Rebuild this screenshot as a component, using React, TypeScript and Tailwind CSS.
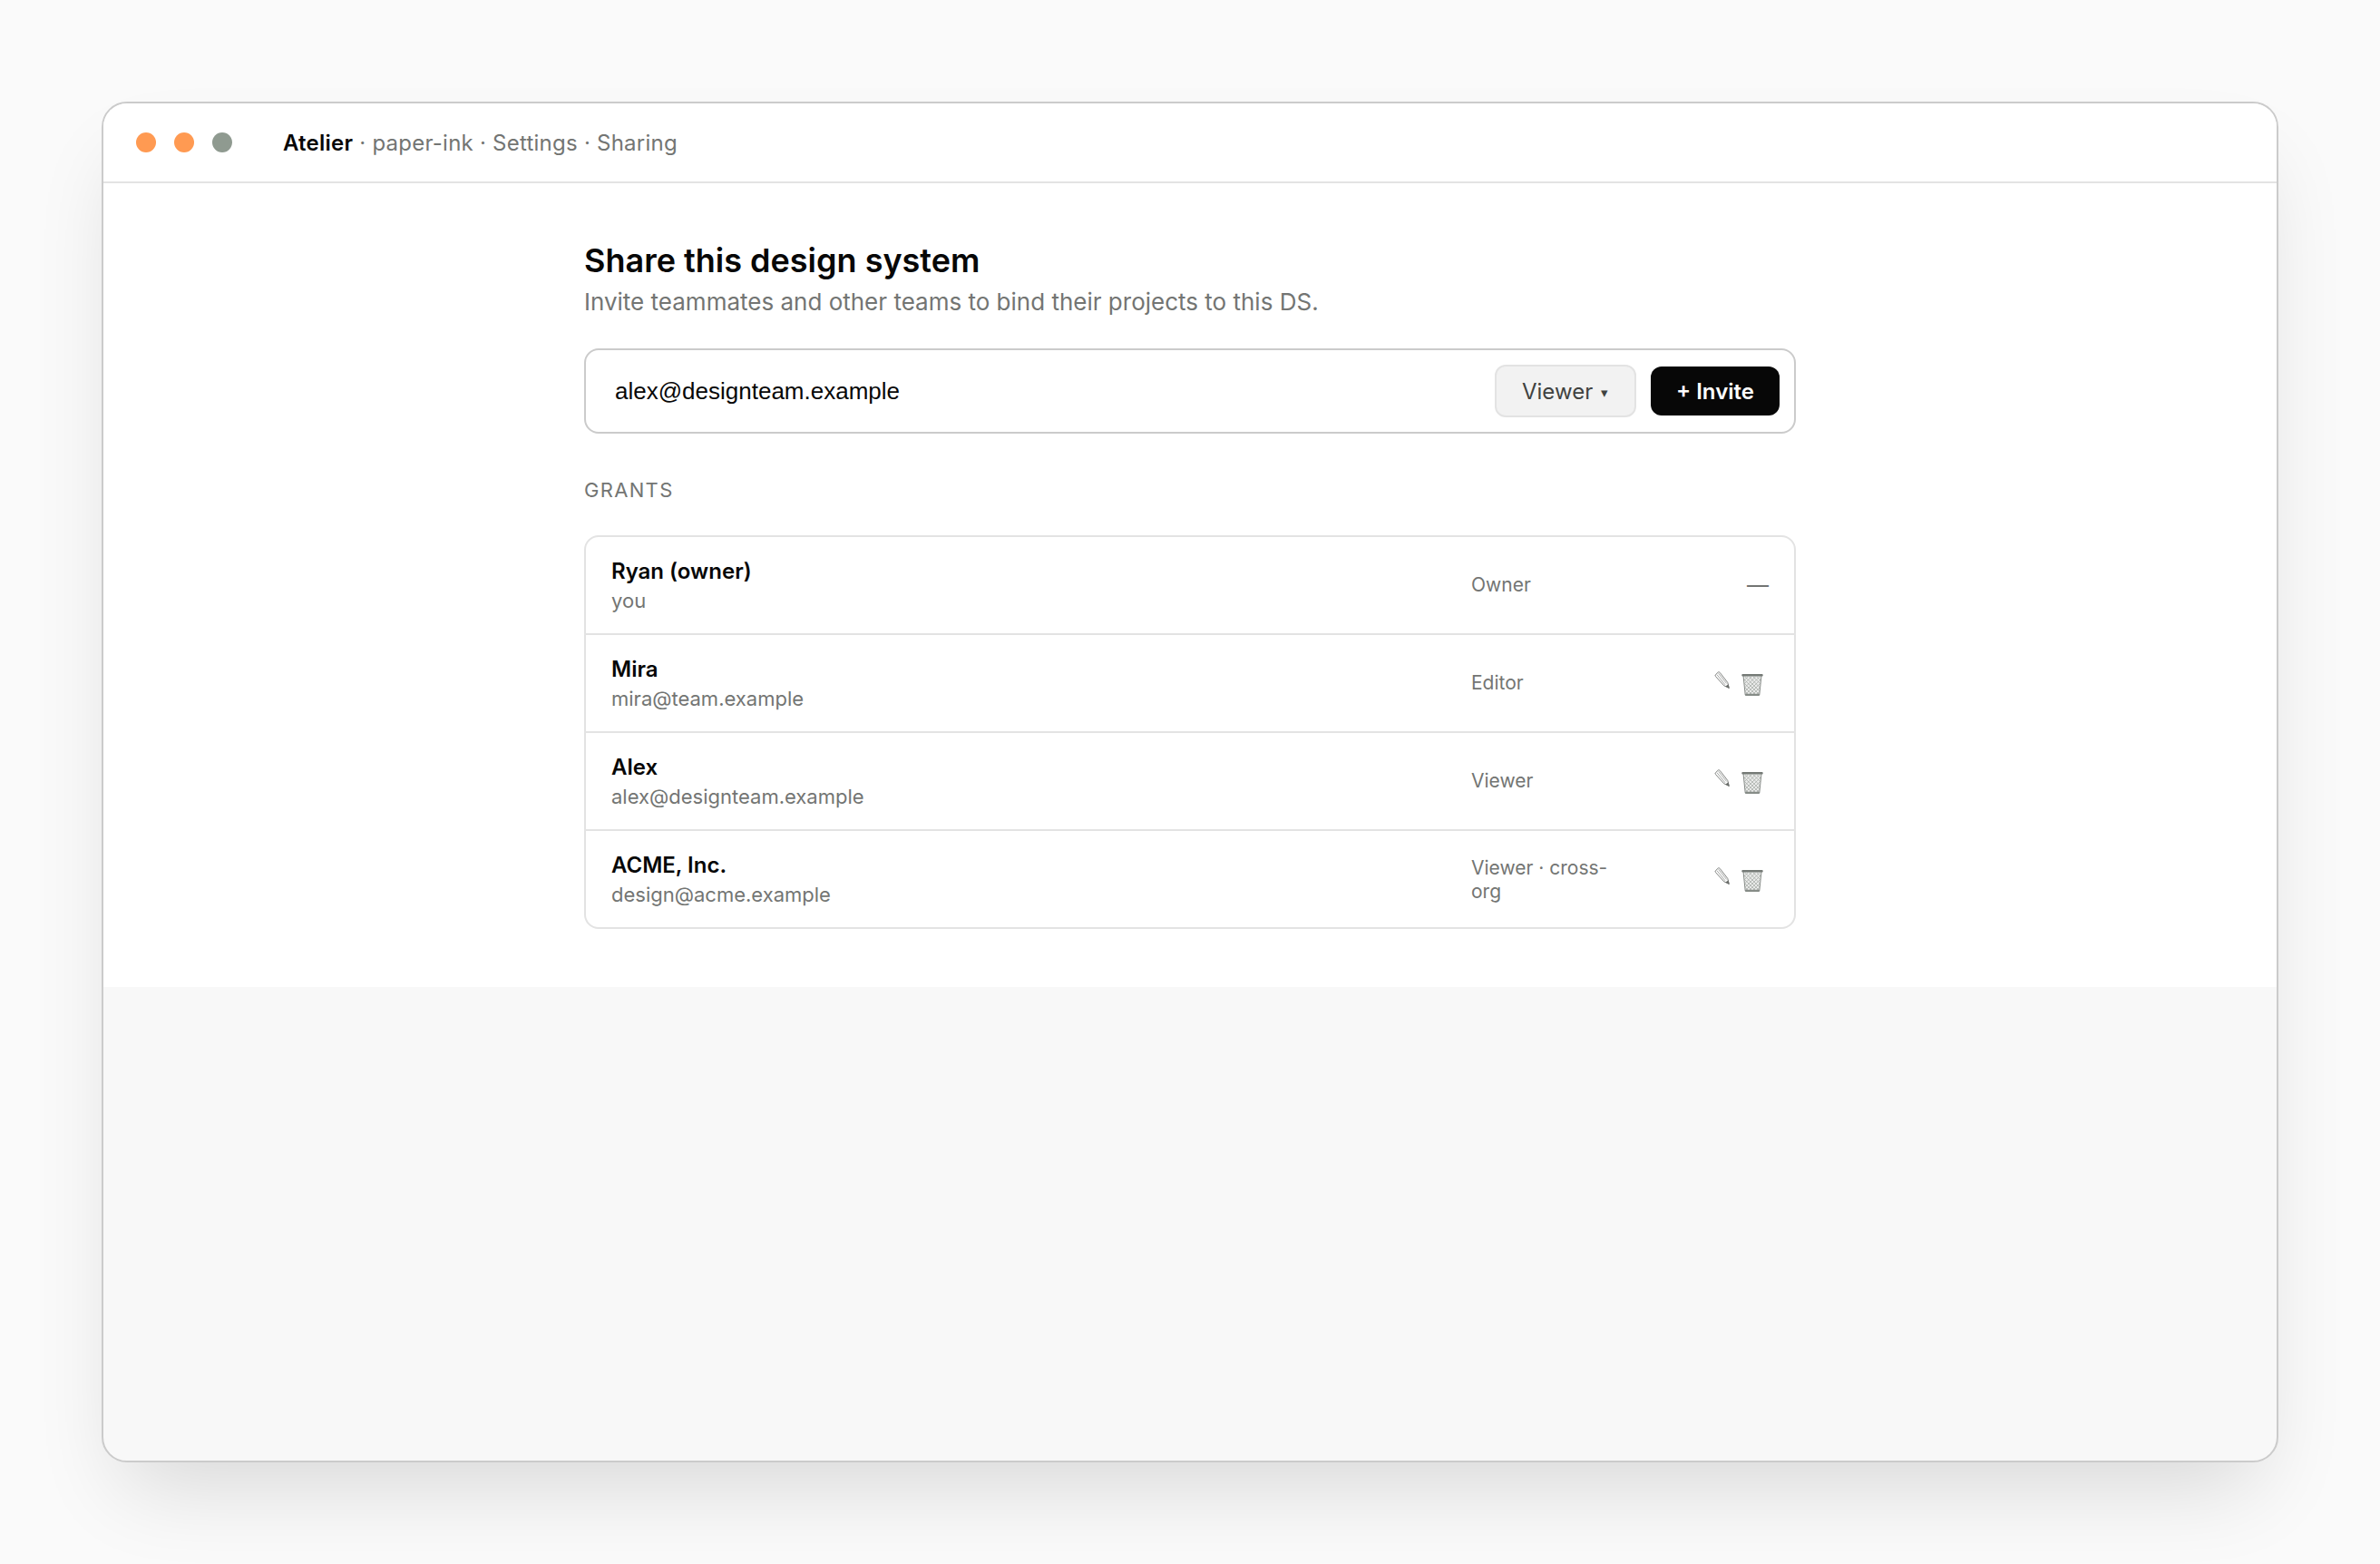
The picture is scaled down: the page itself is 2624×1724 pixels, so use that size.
interface Grant {
  name: string;
  email: string;
  role: string;
  locked?: boolean;
}

const grants: Grant[] = [
  { name: "Ryan (owner)", email: "you", role: "Owner", locked: true },
  { name: "Mira", email: "mira@team.example", role: "Editor" },
  { name: "Alex", email: "alex@designteam.example", role: "Viewer" },
  { name: "ACME, Inc.", email: "design@acme.example", role: "Viewer · cross-org" },
];

function PencilIcon() {
  return (
    <svg className="h-[20px] w-[18px]" viewBox="0 0 18 20" fill="none" stroke="#7f827f">
      <path d="M1.2 4 L4.4 0.9 Q5.4 0.5 6.2 1.4 L14.8 12.4 L16.2 18.4 L10.8 15.8 L1.5 5.6 Q0.8 4.8 1.2 4 Z" strokeWidth="1" />
      <path d="M2.9 3.6 L12 14.8 M4.6 2.2 L13.6 13.4" strokeWidth="0.7" />
      <path d="M16.7 18.9 L12.2 16.6 L15.7 14.2 Z" fill="#6a6d6a" stroke="none" />
    </svg>
  );
}

function TrashIcon() {
  return (
    <svg className="mt-[2px] h-[26px] w-[24px]" viewBox="0 0 24 26" fill="none">
      <path d="M2 2.5 L4.2 24 H19.8 L22 2.5 Z" fill="#e9eae9" stroke="#868b87" strokeWidth="1" />
      <path
        d="M3 8 L7 4 M3 12 L11 4 M3.5 16 L15.5 4 M4 20 L20 4 M5 23 L21 7 M9 23 L20.5 11.5 M13 23 L20 16 M17 23 L19.5 20.5 M21 8 L17 4 M21 12 L13 4 M20.5 16 L8.5 4 M20 20 L4 4 M19 23 L3 7 M15 23 L3.5 11.5 M11 23 L4 16 M7 23 L4.5 20.5"
        stroke="#a3a7a4"
        strokeWidth="0.7"
      />
      <rect x="0.3" y="1" width="23.4" height="2.6" rx="1" fill="#757a76" />
      <rect x="4" y="22.8" width="16" height="2.2" rx="1" fill="#868c87" />
    </svg>
  );
}

function GrantRow({ grant }: { grant: Grant }) {
  return (
    <div className="group grid h-[108px] grid-cols-[1fr_160px_144px] items-center gap-x-6 border-b-2 border-[#e3e3e3] px-7 last:h-[106px] last:border-b-0">
      <div>
        <div className="text-[24px] leading-[34px] font-semibold text-[#070707]">{grant.name}</div>
        <div className="text-[22px] leading-[30px]">{grant.email}</div>
      </div>
      <div className="text-[21px] leading-[26px] group-last:pt-[2px]">{grant.role}</div>
      {grant.locked ? (
        <div className="text-right text-[24px]">—</div>
      ) : (
        <div className="flex items-start justify-end gap-3 pt-[2px] pr-1.5">
          <PencilIcon />
          <TrashIcon />
        </div>
      )}
    </div>
  );
}

export default function App() {
  return (
    <div className="h-[1724px] w-[2624px] overflow-hidden bg-[#fafafa] p-28 font-['Inter',sans-serif] text-[#737573]">
      <div className="h-[1500px] w-[2400px] overflow-hidden rounded-[28px] border-2 border-[#cbcbcb] bg-[#f8f8f8] shadow-[0_48px_96px_-24px_rgba(0,0,0,0.14)]">
        <header className="flex h-[88px] items-center border-b-2 border-[#e3e3e3] bg-white pl-9">
          <div className="mr-14 flex gap-5">
            <span className="size-[22px] rounded-full bg-[#ff9a52]" />
            <span className="size-[22px] rounded-full bg-[#ff9a52]" />
            <span className="size-[22px] rounded-full bg-[#8f9a90]" />
          </div>
          <div className="pt-[2px] text-[24px] tracking-[0.01em]">
            <b className="font-semibold text-[#070707]">Atelier</b> · paper-ink · Settings · Sharing
          </div>
        </header>

        <main className="h-[886px] bg-white pt-[60px]">
          <div className="mx-auto w-[1336px]">
            <h1 className="text-[36px] leading-[50px] font-semibold text-[#070707]">
              Share this design system
            </h1>
            <p className="text-[26px] leading-[42px]">
              Invite teammates and other teams to bind their projects to this DS.
            </p>

            <div className="mt-[30px] flex h-[94px] items-center gap-4 rounded-[16px] border-2 border-[#cbcbcb] px-4">
              <input
                className="min-w-0 flex-1 px-4 font-['Liberation_Sans',sans-serif] text-[26px] text-[#070707] outline-none"
                defaultValue="alex@designteam.example"
              />
              <button className="flex h-[58px] w-[156px] items-center rounded-[12px] border-2 border-[#e3e3e3] bg-[#f2f2f2] pt-[2px] pl-7 text-[24px] whitespace-nowrap text-[#404240]">
                Viewer
                <span className="ml-[9px] pt-[2px] text-[15px]">▾</span>
              </button>
              <button className="h-[54px] w-[142px] rounded-[12px] bg-[#070707] pt-[2px] text-[24px] font-semibold whitespace-nowrap text-white">
                + Invite
              </button>
            </div>

            <h2 className="mt-[46px] text-[22px] leading-[32px] tracking-[0.06em]">GRANTS</h2>
            <div className="mt-[34px] rounded-[16px] border-2 border-[#e3e3e3]">
              {grants.map((grant) => (
                <GrantRow key={grant.name} grant={grant} />
              ))}
            </div>
          </div>
        </main>
      </div>
    </div>
  );
}
